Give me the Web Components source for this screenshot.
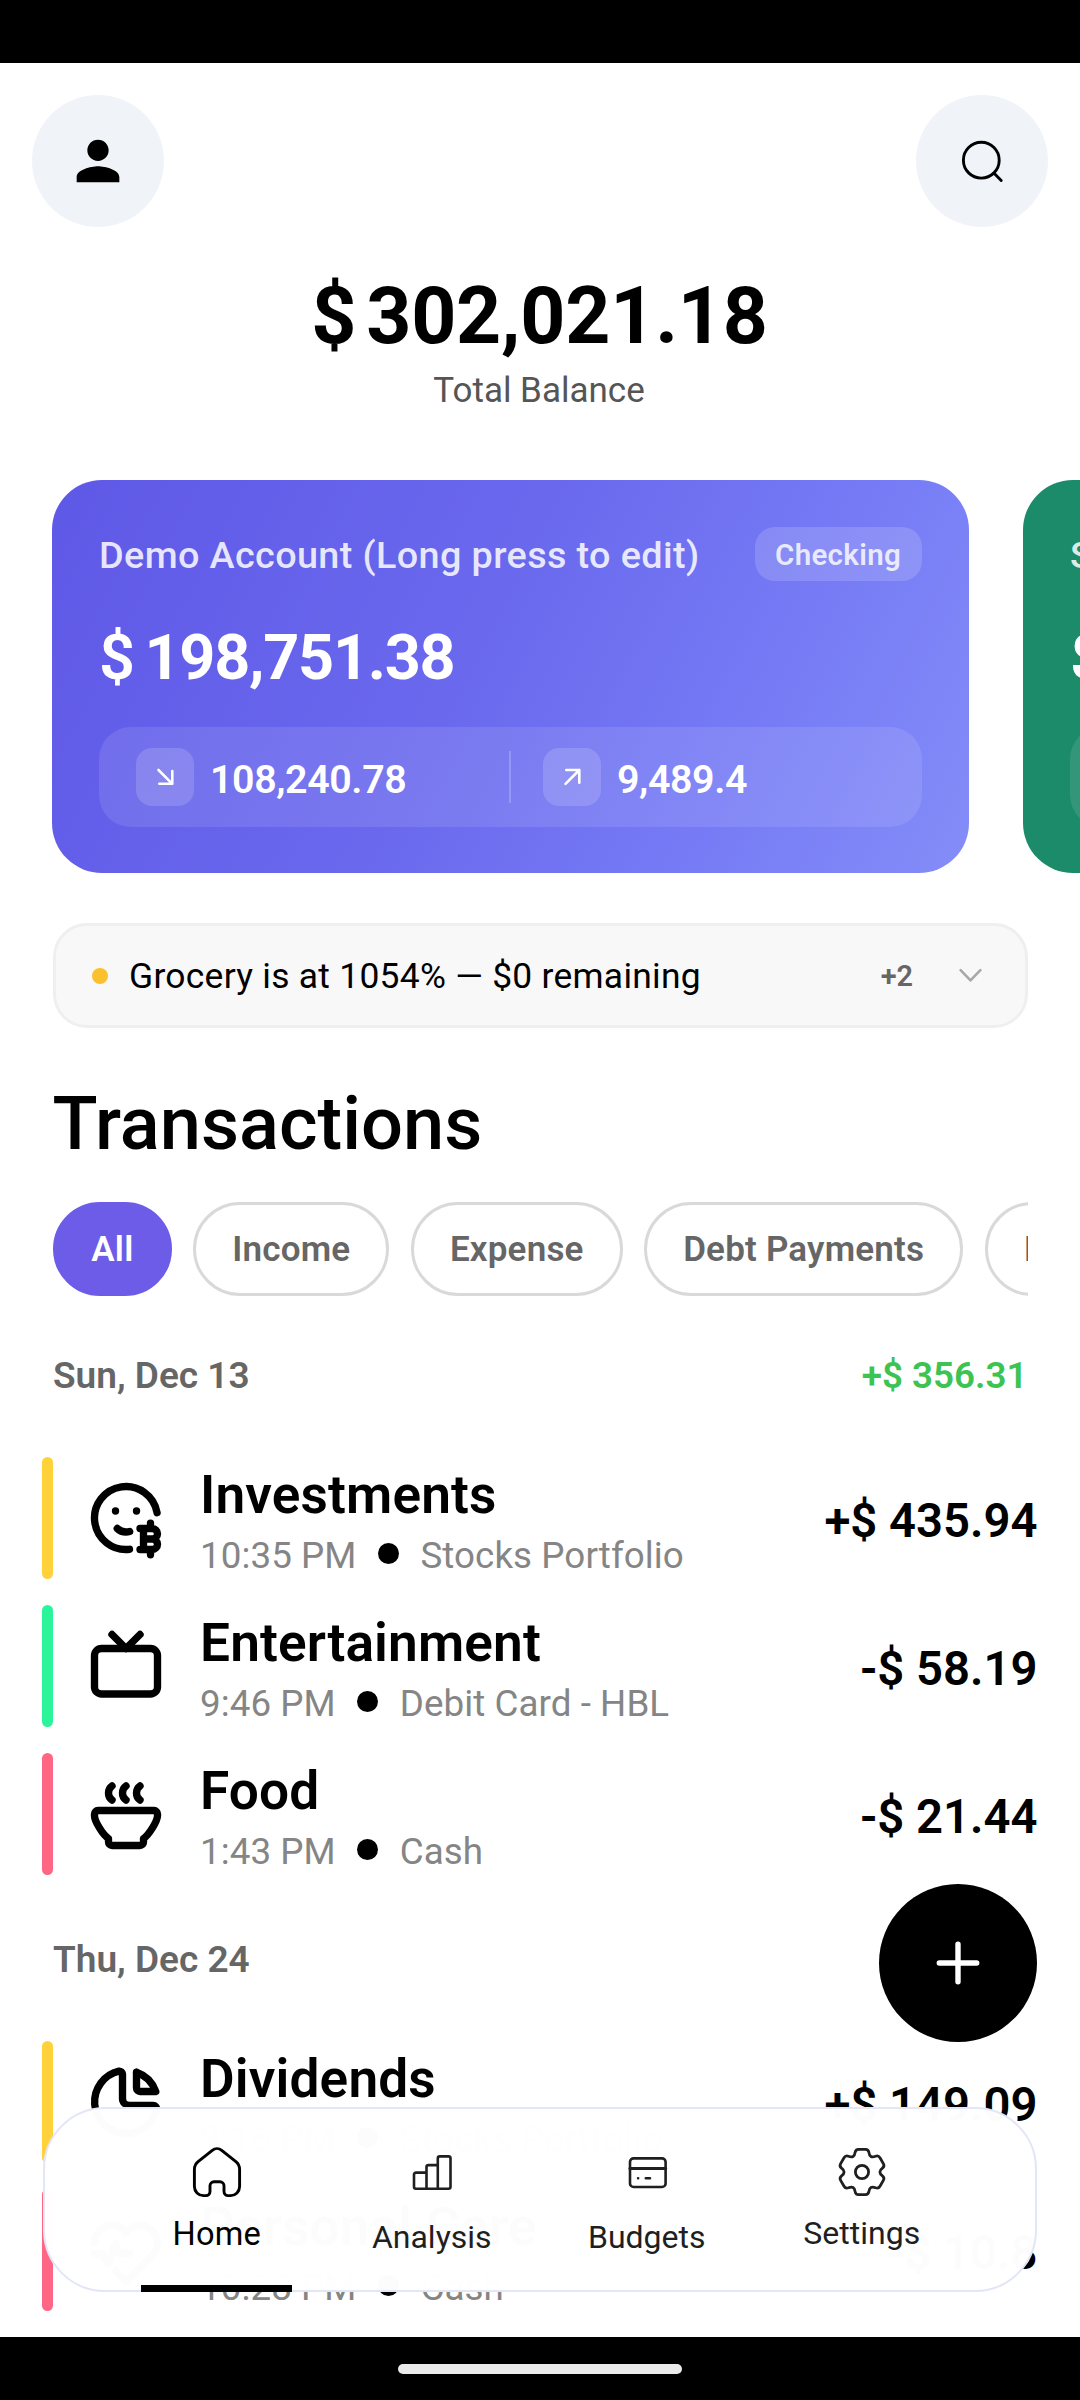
<!DOCTYPE html>
<html lang="en">
<head>
<meta charset="utf-8">
<title>Balance</title>
<style>
html, body { margin: 0; padding: 0; background: #000; }
body { width: 1080px; height: 2400px; overflow: hidden; font-family: Roboto, "Liberation Sans", sans-serif; color: #000; }
</style>
</head>
<body>
<finance-app></finance-app>
<script>
const gearPath = (() => {
  const rot = (x, y, a) => {
    const t = a * Math.PI / 180;
    return (30 + x * Math.cos(t) - y * Math.sin(t)).toFixed(2) + ' ' + (30 + x * Math.sin(t) + y * Math.cos(t)).toFixed(2);
  };
  let d = 'M' + rot(-3.4, -22.7, 0);
  for (let i = 0; i < 6; i++) {
    const a = i * 60;
    d += 'L' + rot(3.4, -22.7, a) + 'Q' + rot(6.4, -22.7, a) + ' ' + rot(6.9, -19.6, a);
    d += 'C' + rot(7.4, -15.4, a) + ' ' + rot(9.63, -14.1, a) + ' ' + rot(13.52, -15.78, a);
    d += 'Q' + rot(-6.4, -22.7, a + 60) + ' ' + rot(-3.4, -22.7, a + 60);
  }
  return d + 'Z';
})();

const ICONS = {
  person: ['0 0 24 24', '<path fill="currentColor" stroke="none" d="M12 12c2.21 0 4-1.79 4-4s-1.79-4-4-4-4 1.79-4 4 1.79 4 4 4zm0 2c-2.67 0-8 1.34-8 4v2h16v-2c0-2.66-5.33-4-8-4z"/>'],
  search: ['0 0 64 64', '<g stroke-width="2.9"><circle cx="31.3" cy="31.2" r="17.9"/><path d="M44.1 44.3L51.2 51.5"/></g>'],
  down: ['0 0 58 58', '<path stroke-width="2.6" d="M22.5 22L36.3 35.8M36.3 23V35.8H23.3"/>'],
  up: ['0 0 58 58', '<path stroke-width="2.6" d="M22.5 35.8L36.3 22M23.3 22H36.3V34.8"/>'],
  chevron: ['0 0 24 24', '<path stroke-width="2.5" d="M2.5 6.8L12 16.6L21.5 6.8"/>'],
  plus: ['0 0 48 48', '<path stroke-width="5.4" d="M24 5.3V42.7M5.3 24H42.7"/>'],
  bitcoin: ['0 0 24 24', '<g stroke-width="2.1"><path d="M20.87 10.48a9 9 0 1 0 -7.876 10.465"/><path d="M9 10h.01M15 10h.01"/><path d="M9.5 15c.658 .64 1.56 1 2.5 1c.357 0 .709 -.052 1.043 -.151"/><path d="M17 21v-6M19 15v-1.5M19 22.5v-1.5M16 15h3.5a1.5 1.5 0 0 1 0 3h-2.5M19.500 18a1.5 1.5 0 0 1 0 3h-3.500"/></g>'],
  tv: ['0 0 24 24', '<g stroke-width="2.1"><rect x="3" y="7" width="18" height="13" rx="2"/><path d="M16 3l-4 4l-4 -4"/></g>'],
  soup: ['0 0 24 24', '<g stroke-width="2.1"><path d="M4 11h16a1 1 0 0 1 1 1v.5c0 1.5 -2.517 5.573 -4 6.5v1a1 1 0 0 1 -1 1h-8a1 1 0 0 1 -1 -1v-1c-1.687 -1.054 -4 -5 -4 -6.5v-.5a1 1 0 0 1 1 -1z"/><path d="M12 4a2.4 2.4 0 0 0 -1 2a2.4 2.4 0 0 0 1 2M16 4a2.4 2.4 0 0 0 -1 2a2.4 2.4 0 0 0 1 2M8 4a2.4 2.4 0 0 0 -1 2a2.4 2.4 0 0 0 1 2"/></g>'],
  pie: ['0 0 24 24', '<g stroke-width="2.1"><path d="M10 3.2a9 9 0 1 0 10.8 10.8a1 1 0 0 0 -1 -1h-6.8a2 2 0 0 1 -2 -2v-7a.9 .9 0 0 0 -1 -.8"/><path d="M15 3.5a9 9 0 0 1 5.5 5.5h-4.5a1 1 0 0 1 -1 -1v-4.5"/></g>'],
  heart: ['0 0 24 24', '<g stroke-width="2.1"><path d="M19.5 13.572l-7.5 7.428l-2.896 -2.868m-6.117 -8.104a5 5 0 0 1 9.013 -3.022a5 5 0 1 1 7.5 6.572"/><path d="M3 13h2l2 3l2 -6l1 3h3"/></g>'],
  home: ['0 0 60 60', '<path stroke-width="2.9" d="M7.4 27.5a10 10 0 0 1 3.7-7.8L25.3 8.3a7.4 7.4 0 0 1 9.4 0L48.9 19.7a10 10 0 0 1 3.7 7.8V44.6a9 9 0 0 1-9 9H41a4 4 0 0 1-4-4V43.8a4 4 0 0 0-4-4H27a4 4 0 0 0-4 4V49.6a4 4 0 0 1-4 4H16.4a9 9 0 0 1-9-9z"/>'],
  analysis: ['0 0 60 60', '<path stroke-width="2.6" d="M24.5 46.8V25.1a2 2 0 0 1 2-2H35.8M24.5 30.6H14a2 2 0 0 0-2 2V44.8a2 2 0 0 0 2 2H46.5a2 2 0 0 0 2-2V16.4a2 2 0 0 0-2-2H37.8a2 2 0 0 0-2 2V46.8"/>'],
  budget: ['0 0 60 60', '<g stroke-width="2.6"><rect x="13" y="16.4" width="35.6" height="28.6" rx="3.6"/><path d="M13 26.4H48.6" stroke-width="3"/><path d="M21.1 36.3h.01M28.8 36.3H33"/></g>'],
  settings: ['0 0 60 60', '<g stroke-width="2.8"><path d="' + gearPath + '"/><circle cx="30" cy="30" r="6.6"/></g>']
};

/* Registers an element whose shadow root is filled from a style and a markup function. */
function define(name, css, markup) {
  customElements.define(name, class extends HTMLElement {
    connectedCallback() {
      if (this.shadowRoot) return;
      const t = document.createElement('template');
      t.innerHTML = `<style>*{box-sizing:border-box}${css}</style>${markup(k => this.getAttribute(k) || '', this)}`;
      this.attachShadow({ mode: 'open' }).append(t.content.cloneNode(true));
    }
  });
}

define('ui-icon', `
  :host{display:block;flex:none;width:60px;height:60px}
  svg{display:block;width:100%;height:100%;fill:none;stroke:currentColor;stroke-linecap:round;stroke-linejoin:round}`,
  a => { const [box, body] = ICONS[a('name')]; return `<svg viewBox="${box}">${body}</svg>`; });

define('round-button', `
  :host{display:flex;align-items:center;justify-content:center;width:132px;height:132px;border-radius:50%;background:#f0f4f9}
  ui-icon{width:64px;height:64px}`,
  a => `<ui-icon name="${a('icon')}"></ui-icon>`);

define('total-balance', `
  :host{display:flex;flex-direction:column;align-items:center;margin-top:43px}
  .sum{display:flex;gap:10px;font-size:78.75px;font-weight:700;line-height:92px;letter-spacing:-.2px;padding-right:1px}
  .label{margin:9px 0 -1px;font-size:35px;line-height:40px;color:#555;padding-right:2px}`,
  () => `<div class="sum"><span>$</span><span>302,021.18</span></div><div class="label"><slot></slot></div>`);

define('account-card', `
  :host{display:flex;flex-direction:column;flex:none;width:917px;height:393px;padding:47px 47px 46px;border-radius:50px;
    background:var(--card);color:#fff}
  .top{display:flex;justify-content:space-between;align-items:center;height:54px}
  .name{font-size:37.8px;font-weight:500;line-height:44px;letter-spacing:.37px;color:rgba(255,255,255,.85);padding-top:2px}
  .badge{height:54px;padding:0 21px 0 20.5px;border-radius:20px;background:rgba(255,255,255,.15);font-size:29.5px;font-weight:600;
    line-height:56px;letter-spacing:.3px;color:rgba(255,255,255,.82)}
  .sum{display:flex;gap:9.5px;margin-top:40px;font-size:63px;font-weight:700;line-height:74px;letter-spacing:-1.3px}
  .sum span:first-child{font-weight:600;letter-spacing:0}
  .stats{display:flex;align-items:center;height:100px;margin-top:32px;border-radius:32px;background:rgba(255,255,255,.1)}
  .stat{display:flex;align-items:center;gap:16px;width:410px;padding-left:37px;font-size:39.375px;font-weight:600;line-height:46px;letter-spacing:-.4px}
  .line{width:2px;height:52px;background:rgba(255,255,255,.2)}
  .line + .stat{padding-left:32px}
  .box{width:58px;height:58px;border-radius:16px;background:rgba(255,255,255,.15)}
  .box ui-icon{width:58px;height:58px}
  .stat span{padding-top:5px}`,
  a => `<div class="top"><div class="name">${a('name')}</div><div class="badge">${a('kind')}</div></div>
    <div class="sum"><span>$</span><span>${a('amount')}</span></div>
    <div class="stats"><div class="stat"><div class="box"><ui-icon name="down"></ui-icon></div><span>${a('in')}</span></div>
    <div class="line"></div><div class="stat"><div class="box"><ui-icon name="up"></ui-icon></div><span>${a('out')}</span></div></div>`);

define('card-strip', `:host{display:flex;gap:54px;margin-top:70px;padding-left:52px;overflow:hidden}`, () => `<slot></slot>`);

define('budget-alert', `
  :host{display:flex;align-items:center;height:105px;margin:50px 52px 0 53px;padding:0 42px 0 36px;box-sizing:border-box;border:3px solid #efefef;border-radius:34px;background:#f8f8f8}
  .dot{width:16px;height:16px;border-radius:50%;background:#fbc02d}
  .text{flex:1;margin-left:21px;font-size:35.4px;line-height:40px;letter-spacing:.28px}
  .more{font-size:28.875px;font-weight:600;line-height:34px;color:#666;margin-right:45px}
  ui-icon{width:25px;height:25px;color:#a8a8a8}`,
  a => `<div class="dot"></div><div class="text"><slot></slot></div><div class="more">${a('more')}</div><ui-icon name="chevron"></ui-icon>`);

define('filter-chip', `
  :host{display:flex;align-items:center;flex:none;height:94px;padding:2px 36px 0;border:3px solid #d9d9d9;border-radius:47px;
    font-size:35px;font-weight:600;letter-spacing:.2px;line-height:40px;color:#666;white-space:nowrap;box-sizing:border-box}
  :host([selected]){background:#6c5ce7;border-color:#6c5ce7;color:#fff;padding:2px 35.3px 0}`, () => `<slot></slot>`);

define('chip-row', `:host{display:flex;gap:21.5px;margin:35px 52px 0 53px;overflow:hidden}`, () => `<slot></slot>`);

define('day-header', `
  :host{display:flex;justify-content:space-between;padding:0 52.5px 0 53px;margin-top:58px;font-size:37px;font-weight:600;line-height:44px;color:#666}
  .sum{font-size:36.75px;color:#3cc351}`,
  a => `<span>${a('date')}</span><span class="sum">${a('sum')}</span>`);

define('tx-row', `
  :host{display:flex;align-items:flex-start;height:122px;margin:0 42.5px 26px 42px}
  .bar{flex:none;width:11px;height:122px;border-radius:5.5px;background:var(--bar)}
  ui-icon{width:84px;height:84px;margin:18.5px 32px 0 31px}
  .main{flex:1;padding-top:8px}
  .title{font-size:53.2px;font-weight:600;line-height:61px;letter-spacing:.15px}
  .sub{display:flex;align-items:center;gap:21.5px;margin-top:8px;font-size:36.75px;line-height:43px;letter-spacing:.07px;color:#858585}
  .dot{width:21px;height:21px;border-radius:50%;background:#000;margin-top:-4px}
  .sum{font-size:47.25px;font-weight:600;line-height:55px;margin-top:37px}`,
  a => `<div class="bar"></div><ui-icon name="${a('icon')}"></ui-icon>
    <div class="main"><div class="title">${a('name')}</div><div class="sub"><span>${a('time')}</span><span class="dot"></span><span>${a('account')}</span></div></div>
    <div class="sum">${a('sum')}</div>`);

define('nav-item', `
  :host{display:flex;flex-direction:column;align-items:center;box-sizing:border-box;width:215px;height:185px;padding-top:35px;color:#1f1f1f;
    font-size:32px;line-height:38px}
  .label{margin-top:16px}
  :host([icon=settings]) .label{margin-top:12px}
  :host([active]){color:#000;font-size:32.6px;letter-spacing:.2px}
  :host([active]) .label{margin-top:13px}
  .mark{width:151px;height:7px;margin-top:auto}
  :host([active]) .mark{background:#000}`,
  a => `<ui-icon name="${a('icon')}"></ui-icon><div class="label"><slot></slot></div><div class="mark"></div>`);

define('tab-bar', `
  :host{position:absolute;left:43px;bottom:108px;width:994px;height:185px;box-sizing:border-box;border:2.6px solid #e3e6f6;border-radius:62px;background:rgba(255,255,255,.99);
    display:flex;justify-content:center;align-items:center;padding-right:1.5px}`, () => `<slot></slot>`);

define('add-button', `
  :host{position:absolute;right:43px;top:1884px;width:158px;height:158px;border-radius:50%;background:#000;color:#fff;display:flex;align-items:center;justify-content:center}
  ui-icon{width:48px;height:48px}`, () => `<ui-icon name="plus"></ui-icon>`);

define('finance-app', `
  :host{display:flex;flex-direction:column;position:relative;width:1080px;height:2400px;overflow:hidden;background:#000}
  .status{flex:none;height:63px}
  main{flex:none;height:2274px;background:#fff;overflow:hidden}
  header{display:flex;justify-content:space-between;padding:32px 32px 0}
  h1{margin:53px 0 0 52.5px;font-size:74px;font-weight:500;line-height:86px}
  .list{margin-top:59px}
  .list + day-header{margin-top:63px}
  .system{flex:none;display:flex;justify-content:center;height:63px;padding-top:27px}
  .system div{width:284px;height:10px;border-radius:5px;background:#ebebeb}`,
  () => `
  <div class="status"></div>
  <main>
    <header><round-button icon="person"></round-button><round-button icon="search"></round-button></header>
    <total-balance>Total Balance</total-balance>
    <card-strip>
      <account-card style="--card:linear-gradient(117deg,#5f58e7 0%,#6a69ee 46%,#767bf5 74%,#848df8 100%)" name="Demo Account (Long press to edit)" kind="Checking" amount="198,751.38" in="108,240.78" out="9,489.4"></account-card>
      <account-card style="--card:#1c8b69" name="Savings" kind="Savings" amount="103,269.80" in="0" out="0"></account-card>
    </card-strip>
    <budget-alert more="+2">Grocery is at 1054% — $0 remaining</budget-alert>
    <h1>Transactions</h1>
    <chip-row><filter-chip selected>All</filter-chip><filter-chip>Income</filter-chip><filter-chip>Expense</filter-chip><filter-chip>Debt Payments</filter-chip><filter-chip>Investments</filter-chip></chip-row>
    <day-header date="Sun, Dec 13" sum="+$ 356.31"></day-header>
    <div class="list">
      <tx-row style="--bar:#ffd23b" icon="bitcoin" name="Investments" time="10:35 PM" account="Stocks Portfolio" sum="+$ 435.94"></tx-row>
      <tx-row style="--bar:#2bf59b" icon="tv" name="Entertainment" time="9:46 PM" account="Debit Card - HBL" sum="-$ 58.19"></tx-row>
      <tx-row style="--bar:#ff6584" icon="soup" name="Food" time="1:43 PM" account="Cash" sum="-$ 21.44"></tx-row>
    </div>
    <day-header date="Thu, Dec 24"></day-header>
    <div class="list">
      <tx-row style="--bar:#ffd23b" icon="pie" name="Dividends" time="9:16 PM" account="Stocks Portfolio" sum="+$ 149.09"></tx-row>
      <tx-row style="--bar:#ff6584" icon="heart" name="Personal Care" time="10:28 PM" account="Cash" sum="-$ 10.8"></tx-row>
    </div>
  </main>
  <div class="system"><div></div></div>
  <add-button></add-button>
  <tab-bar>
    <nav-item icon="home" active>Home</nav-item><nav-item icon="analysis">Analysis</nav-item><nav-item icon="budget">Budgets</nav-item><nav-item icon="settings">Settings</nav-item>
  </tab-bar>`);
</script>
</body>
</html>
